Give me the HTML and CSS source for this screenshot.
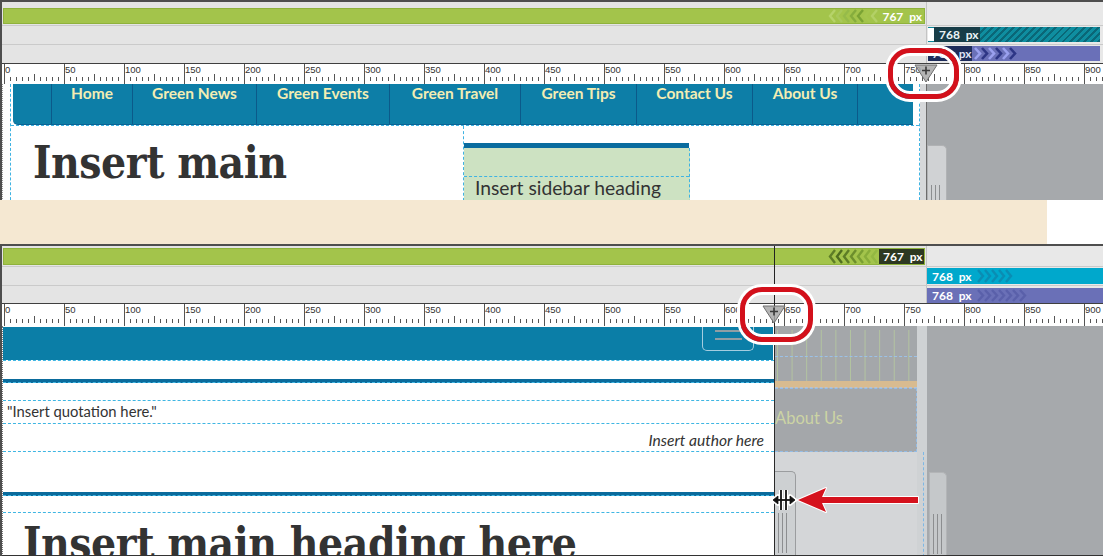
FILE: index.html
```html
<!DOCTYPE html>
<html>
<head>
<meta charset="utf-8">
<title>Media query resize</title>
<link rel="stylesheet" href="styles.css">
</head>
<body>
<div class="screen">

  <section class="panel panel-top">
    <div class="rows">
      <div class="row r1">
        <div class="lane">
          <div class="bar green">
            <svg class="chev" width="52" height="16" viewBox="0 0 52 16">
              <g fill="none" stroke-width="2.4">
                <polyline points="8,2 3,8 8,14" stroke="#b6d36a"/>
                <polyline points="15,2 10,8 15,14" stroke="#a9c95c"/>
                <polyline points="22,2 17,8 22,14" stroke="#96bb4a"/>
                <polyline points="29,2 24,8 29,14" stroke="#86ad3d"/>
                <polyline points="36,2 31,8 36,14" stroke="#7aa334"/>
                <polyline points="43,2 38,8 43,14" stroke="#a4c64e"/>
                <polyline points="50,2 45,8 50,14" stroke="#b3d066"/>
              </g>
            </svg>
            <span class="px">767&nbsp; px</span>
          </div>
        </div>
        <div class="lane right"></div>
      </div>
      <div class="row r2">
        <div class="lane"></div>
        <div class="lane right">
          <div class="bar teal-h">
            <i class="nub"></i>
            <span class="px dark-teal">768&nbsp; px</span>
            <span class="hatch"></span>
          </div>
        </div>
      </div>
      <div class="row r3">
        <div class="lane"></div>
        <div class="lane right">
          <div class="bar purple">
            <span class="px navy">768&nbsp; px</span>
            <svg class="chev" width="50" height="15" viewBox="0 0 50 15">
              <g fill="none" stroke-width="2.6">
                <polyline points="3,2 8,7.5 3,13" stroke="#9aa0ee"/>
                <polyline points="10,2 15,7.5 10,13" stroke="#2d3585"/>
                <polyline points="17,2 22,7.5 17,13" stroke="#9aa0ee"/>
                <polyline points="24,2 29,7.5 24,13" stroke="#2d3585"/>
                <polyline points="31,2 36,7.5 31,13" stroke="#9aa0ee"/>
                <polyline points="38,2 43,7.5 38,13" stroke="#2d3585"/>
              </g>
            </svg>
          </div>
        </div>
      </div>
    </div>

    <div class="ruler">
      <span>0</span><span>50</span><span>100</span><span>150</span><span>200</span><span>250</span><span>300</span><span>350</span><span>400</span><span>450</span><span>500</span><span>550</span><span>600</span><span>650</span><span>700</span><span>750</span><span>800</span><span>850</span><span>900</span>
    </div>

    <div class="view view-top">
      <div class="page page-top">
        <div class="frame">
          <nav class="nav-top">
            <span class="sp"></span>
            <a>Home</a>
            <a>Green News</a>
            <a>Green Events</a>
            <a>Green Travel</a>
            <a>Green Tips</a>
            <a>Contact Us</a>
            <a>About Us</a>
            <span class="sp end"></span>
          </nav>
          <div class="content">
            <div class="main">
              <h1 class="slab">Insert main</h1>
            </div>
            <aside class="sidebar">
              <div class="sb-bar"></div>
              <div class="sb-box">
                <div class="sb-top"></div>
                <h2>Insert sidebar heading</h2>
              </div>
            </aside>
          </div>
        </div>
      </div>
      <div class="strip"></div>
      <div class="off off-top"><div class="handle"><i></i></div></div>
    </div>
  </section>

  <div class="band"><div class="band-fill"></div></div>

  <section class="panel panel-bottom">
    <div class="rows">
      <div class="row r1">
        <div class="lane">
          <div class="bar green">
            <svg class="chev" width="52" height="17" viewBox="0 0 52 17">
              <g fill="none" stroke-width="2.4">
                <polyline points="8,2 3,8.5 8,15" stroke="#5d7d26"/>
                <polyline points="15,2 10,8.5 15,15" stroke="#4f6e1f"/>
                <polyline points="22,2 17,8.5 22,15" stroke="#5d7d26"/>
                <polyline points="29,2 24,8.5 29,15" stroke="#6c8e2c"/>
                <polyline points="36,2 31,8.5 36,15" stroke="#7a9f33"/>
                <polyline points="43,2 38,8.5 43,15" stroke="#88ad3a"/>
                <polyline points="50,2 45,8.5 50,15" stroke="#93b842"/>
              </g>
            </svg>
            <span class="px olive">767&nbsp; px</span>
          </div>
        </div>
        <div class="lane right"></div>
      </div>
      <div class="row r2">
        <div class="lane"></div>
        <div class="lane right">
          <div class="bar cyan">
            <span class="px">768&nbsp; px</span>
            <svg class="chev" width="40" height="16" viewBox="0 0 40 16">
              <g fill="none" stroke-width="2.4" stroke="#0a8db3">
                <polyline points="3,2 8,8 3,14"/>
                <polyline points="10,2 15,8 10,14"/>
                <polyline points="17,2 22,8 17,14"/>
                <polyline points="24,2 29,8 24,14"/>
                <polyline points="31,2 36,8 31,14"/>
              </g>
            </svg>
          </div>
        </div>
      </div>
      <div class="row r3">
        <div class="lane"></div>
        <div class="lane right">
          <div class="bar purple-b">
            <span class="px">768&nbsp; px</span>
            <svg class="chev" width="56" height="15" viewBox="0 0 56 15">
              <g fill="none" stroke-width="2.4" stroke="#5a60aa">
                <polyline points="3,2 8,7.5 3,13"/>
                <polyline points="10,2 15,7.5 10,13"/>
                <polyline points="17,2 22,7.5 17,13"/>
                <polyline points="24,2 29,7.5 24,13"/>
                <polyline points="31,2 36,7.5 31,13"/>
                <polyline points="38,2 43,7.5 38,13"/>
                <polyline points="45,2 50,7.5 45,13"/>
              </g>
            </svg>
          </div>
        </div>
      </div>
    </div>

    <div class="ruler ruler-b">
      <span>0</span><span>50</span><span>100</span><span>150</span><span>200</span><span>250</span><span>300</span><span>350</span><span>400</span><span>450</span><span>500</span><span>550</span><span>600</span><span>650</span><span>700</span><span>750</span><span>800</span><span>850</span><span>900</span>
    </div>

    <div class="view view-bottom">
      <div class="page page-b">
        <nav class="nav-b"><div class="burger"><i></i><i></i></div></nav>
        <div class="gap g1"></div>
        <div class="rule"></div>
        <div class="gap g2"></div>
        <div class="quote">"Insert quotation here."</div>
        <div class="author">Insert author here</div>
        <div class="gap g3"></div>
        <div class="rule"></div>
        <div class="gap g4"></div>
        <div class="heading"><h1 class="slab">Insert main heading here</h1></div>
      </div>
      <div class="gutter">
        <div class="g-upper">
          <div class="g-lines first"></div>
          <div class="g-lines second"></div>
          <div class="g-tan"></div>
          <div class="g-about">About Us</div>
        </div>
        <div class="g-lower"><div class="handle small"><i></i></div></div>
      </div>
      <div class="strip2"><div class="strip2-line"></div></div>
      <div class="off off-b"><div class="handle tall"><i></i></div></div>
    </div>
  </section>

  <div class="vline"></div>

  <svg class="marker m1" width="24" height="19" viewBox="0 0 24 19">
    <polygon points="1,1 23,1 12,18" fill="#a7a7a7" fill-opacity="0.85" stroke="#6f6f6f" stroke-width="1"/>
    <path d="M8 6.5h8M12 2.5v8" stroke="#3a3a3a" stroke-width="1.6"/>
  </svg>
  <svg class="marker m2" width="24" height="19" viewBox="0 0 24 19">
    <polygon points="1,1 23,1 12,18" fill="#a7a7a7" fill-opacity="0.85" stroke="#6f6f6f" stroke-width="1"/>
    <path d="M8 6.5h8M12 2.5v8" stroke="#3a3a3a" stroke-width="1.6"/>
  </svg>

  <div class="ring ring-top"></div>
  <div class="ring ring-bot"></div>

  <svg class="arrow" width="126" height="30" viewBox="0 0 126 30">
    <polygon points="3,15 31,3 27,12 123,12 123,18 27,18 31,27" fill="#d5121d" stroke="#fff" stroke-width="2" stroke-linejoin="round" paint-order="stroke"/>
  </svg>

  <svg class="cursor" width="26" height="24" viewBox="0 0 26 24">
    <g stroke="#fff" stroke-width="4" fill="#fff" stroke-linejoin="round">
      <path d="M10 2v20M15 2v20" fill="none"/>
      <path d="M2 12l5-4v8z"/>
      <path d="M24 12l-5-4v8z"/>
      <path d="M5 12h16" fill="none"/>
    </g>
    <g stroke="#111" stroke-width="1.8" fill="#111">
      <path d="M10 2v20M15 2v20" fill="none"/>
      <path d="M2 12l5-4v8z" stroke-width="0.8"/>
      <path d="M24 12l-5-4v8z" stroke-width="0.8"/>
      <path d="M5 12h16" fill="none"/>
    </g>
  </svg>

</div>
</body>
</html>
```

FILE: styles.css
```css
html, body {
  margin: 0;
  padding: 0;
  background: #ffffff;
}

body {
  font-family: "Lato", "Open Sans", sans-serif;
  color: #333333;
}

.screen {
  position: relative;
  width: 1103px;
  height: 556px;
  overflow: hidden;
  background: #ffffff;
}

/* ---------- panels ---------- */
.panel {
  box-sizing: border-box;
  border-top: 2px solid #4e4e4e;
  border-left: 2px solid #4e4e4e;
  display: flex;
  flex-direction: column;
  overflow: hidden;
}

.panel-top {
  height: 200px;
}

.panel-bottom {
  height: 312px;
}

.row {
  display: grid;
  grid-template-columns: 924px 1fr;
  box-sizing: border-box;
}

.lane {
  background: #e4e4e4;
  display: flex;
  align-items: flex-start;
}

.lane.right {
  background: #e8e8e8;
  border-left: 1px solid #c4c4c4;
}

.panel-top .r1 { height: 24px; border-bottom: 1px solid #cacaca; }
.panel-top .r2 { height: 19px; border-bottom: 1px solid #cacaca; }
.panel-top .r3 { height: 18px; }

.panel-bottom .r1 { height: 21px; border-bottom: 1px solid #cacaca; }
.panel-bottom .r2 { height: 19px; border-bottom: 1px solid #cacaca; }
.panel-bottom .r3 { height: 17px; }

.bar {
  display: flex;
  align-items: center;
  box-sizing: border-box;
}

.px {
  font-family: "Lato", sans-serif;
  font-weight: 700;
  font-size: 12px;
  color: #ffffff;
  white-space: nowrap;
  height: 100%;
  display: flex;
  align-items: center;
  box-sizing: border-box;
}

.green {
  width: 922px;
  margin-left: 1px;
  background: #a3c44b;
  border: 1px solid #8fb23c;
  justify-content: flex-end;
}

.panel-top .green {
  margin-top: 6px;
  height: 16px;
}

.panel-top .green .px {
  padding: 0 2px 0 3px;
}

.panel-bottom .green {
  margin-top: 2px;
  height: 17px;
}

.px.olive {
  background: #2d3821;
  padding: 0 2px 0 4px;
  width: 45px;
}

/* top right bars */
.teal-h {
  margin: 1px 3px 0 1px;
  height: 15px;
  flex: 1;
  background: #0c8799;
}

.nub {
  display: block;
  width: 6px;
  height: 13px;
  background: #ffffff;
}

.px.dark-teal {
  background: #173d48;
  color: #eaf3f5;
  width: 46px;
  padding-left: 5px;
}

.hatch {
  flex: 1;
  height: 100%;
  background: repeating-linear-gradient(135deg, #0f8ea0 0 3px, #0a6777 3px 5px);
}

.purple {
  margin: 1px 3px 0 1px;
  height: 15px;
  flex: 1;
  background: #6a70b8;
}

.px.navy {
  background: #1e2c5a;
  color: #dfe3f4;
  width: 44px;
  padding-left: 4px;
}

/* bottom right bars */
.cyan {
  margin-top: 1px;
  height: 16px;
  flex: 1;
  background: #00a8cc;
}

.cyan .px,
.purple-b .px {
  padding-left: 5px;
  padding-right: 3px;
}

.purple-b {
  margin-top: 2px;
  height: 15px;
  flex: 1;
  background: #6a70b7;
}

/* ---------- ruler ---------- */
.ruler {
  box-sizing: border-box;
  height: 21px;
  border-top: 1px solid #3f3f3f;
  background-color: #ffffff;
  background-image:
    linear-gradient(to right, #555 1px, transparent 1px),
    linear-gradient(to right, #555 1px, transparent 1px),
    linear-gradient(to right, #555 1px, transparent 1px);
  background-size: 60px 100%, 60px 7px, 6px 4px;
  background-repeat: repeat-x;
  background-position: left 2px top 0, left 32px bottom 3px, left 2px bottom 3px;
  display: flex;
  padding-left: 3px;
  overflow: hidden;
  flex-shrink: 0;
}

.ruler-b {
  height: 23px;
}

.ruler span {
  flex: 0 0 60px;
  font-family: "Liberation Sans", sans-serif;
  font-size: 9.5px;
  line-height: 11px;
  color: #333;
}

/* ---------- top view ---------- */
.view {
  display: grid;
  overflow: hidden;
  flex: 1;
}

.view-top {
  grid-template-columns: 918px 6px 1fr;
}

.page-top {
  background: #ffffff;
  border-left: 1px dotted #9a9a9a;
  padding-left: 7px;
  overflow: hidden;
}

.frame {
  border-left: 1px dashed #3fb3e2;
  border-right: 1px dashed #3fb3e2;
  height: 100%;
  box-sizing: border-box;
}

.nav-top {
  margin-left: 2px;
  width: 900px;
  height: 41px;
  box-sizing: border-box;
  background: #0d7ea7;
  border-bottom: 1px solid #0b6292;
  border-radius: 0 0 0 5px;
  display: grid;
  grid-template-columns: 38px 81px 124px 133px 131px 116px 116px 105px 1fr;
}

.nav-top a,
.nav-top .sp.end {
  border-left: 1px solid #0b5a8a;
}

.nav-top a {
  text-align: center;
  color: #f3edb3;
  font-family: "Lato", sans-serif;
  font-weight: 700;
  font-size: 15.5px;
  line-height: 18px;
  white-space: nowrap;
}

.content {
  display: flex;
  border-top: 1px dashed #3fb3e2;
  height: 80px;
}

.main {
  flex: 0 0 452px;
}

.slab {
  margin: 0;
  font-family: "DejaVu Serif", serif;
  font-weight: 700;
  font-stretch: condensed;
  color: #333333;
  letter-spacing: -0.5px;
  white-space: nowrap;
}

.main .slab {
  font-size: 44px;
  line-height: 50px;
  padding: 12px 0 0 22px;
}

.sidebar {
  flex: 0 0 227px;
  box-sizing: border-box;
  border-left: 1px dashed #3fb3e2;
  padding-top: 17px;
}

.sb-bar {
  height: 5px;
  background: #0a6c9f;
  margin-right: 1px;
}

.sb-box {
  background: #cde2c2;
  border-right: 1px dashed #3fb3e2;
  height: 60px;
}

.sb-top {
  height: 29px;
  box-sizing: border-box;
  border-bottom: 1px dashed #3fb3e2;
}

.sb-box h2 {
  margin: 0;
  padding-left: 11px;
  font-family: "Lato", sans-serif;
  font-weight: 400;
  font-size: 19.3px;
  line-height: 22px;
  color: #333333;
  white-space: nowrap;
}

.strip {
  background: #d6d8da;
}

.off {
  background: #a6a9ac;
}

.off-top {
  border-left: 1px solid #6c6c6c;
}

.handle {
  box-sizing: border-box;
  background: #d0d2d4;
  border: 1px solid #b0b2b4;
  border-bottom: 0;
  border-radius: 0 5px 0 0;
  display: flex;
  align-items: flex-end;
  padding-left: 3px;
}

.handle i {
  display: block;
  width: 11px;
  height: 70%;
  background: repeating-linear-gradient(to right, #8c8e90 0 1px, transparent 1px 4px);
}

.off-top .handle {
  margin-top: 61px;
  width: 20px;
  height: 60px;
}

.off-top .handle i {
  height: 20px;
}

/* ---------- band ---------- */
.band {
  height: 44px;
  display: flex;
  background: #ffffff;
}

.band-fill {
  width: 1047px;
  background: #f5e8d2;
}

/* ---------- bottom view ---------- */
.view-bottom {
  grid-template-columns: 773px 142px 10px 1fr;
  border-bottom: 1px solid #333;
  box-sizing: border-box;
}

.page-b {
  background: #ffffff;
  border-left: 1px dotted #777;
  border-right: 1px solid #2a2a2a;
  overflow: hidden;
}

.nav-b {
  margin-top: 1px;
  height: 33px;
  margin-right: 1px;
  background: #0b7ea7;
  display: flex;
  justify-content: flex-end;
  padding-right: 19px;
}

.burger {
  width: 52px;
  height: 24px;
  box-sizing: border-box;
  border: 1px solid #a5cde0;
  border-top: 0;
  border-radius: 0 0 5px 5px;
  padding-top: 3px;
  display: flex;
  flex-direction: column;
  align-items: center;
  gap: 6px;
}

.burger i {
  display: block;
  width: 27px;
  height: 2px;
  background: #8f9ea4;
}

.gap,
.quote,
.author,
.heading {
  box-sizing: border-box;
  border-top: 1px dashed #3fb6e3;
}

.g1 { height: 19px; }
.g2 { height: 17px; border-top: 0; }
.g3 { height: 41px; }
.g4 { height: 16px; border-top: 0; }

.rule {
  height: 4px;
  box-sizing: border-box;
  background: #0a6b9c;
  border-bottom: 1px dashed #3fb6e3;
}

.quote {
  height: 23px;
  padding-left: 4px;
  font-size: 14.8px;
  line-height: 21px;
  color: #333;
}

.author {
  height: 28px;
  text-align: right;
  padding: 5px 10px 0 0;
  font-size: 15.6px;
  line-height: 22px;
  font-style: italic;
  color: #333;
}

.heading {
  overflow: hidden;
}

.heading .slab {
  font-size: 44px;
  line-height: 50px;
  padding: 6px 0 0 20px;
}

.gutter {
  display: flex;
  flex-direction: column;
}

.g-upper {
  height: 126px;
  background: #a4a7aa;
}

.g-lines {
  background-image: linear-gradient(to right, #b3c4a0 1px, transparent 1px);
  background-size: 14.6px 100%;
  background-position: 2px 0;
  box-sizing: border-box;
}

.g-lines.first {
  height: 31px;
  border-bottom: 1px dashed #9cc2e8;
  background-position: 2px 4px;
  background-repeat: repeat-x;
}

.g-lines.second {
  height: 24px;
}

.g-tan {
  height: 7px;
  background: #d8bb90;
  border-bottom: 1px dashed #b6c3d6;
  box-sizing: border-box;
}

.g-about {
  height: 64px;
  box-sizing: border-box;
  border: 1px dashed #94bde6;
  border-left: 0;
  padding-top: 18px;
  font-size: 16.5px;
  line-height: 22px;
  color: #ccd4a4;
}

.g-lower {
  flex: 1;
  background: #d4d6d8;
}

.handle.small {
  margin-top: 19px;
  width: 21px;
  height: 90px;
  background: #cdd0d2;
  border-color: #9b9d9f;
  border-left: 0;
}

.handle.small i {
  height: 40px;
  margin-bottom: 8px;
}

.strip2 {
  background: #cfd2d4;
}

.strip2-line {
  margin-top: 126px;
  width: 6px;
  height: 110px;
  border-right: 1px dashed #7db8e6;
}

.off-b .handle.tall {
  margin: 146px 0 0 2px;
  width: 18px;
  height: 90px;
  background: #c5c8ca;
  border-color: #b3b5b7;
}

.off-b .handle.tall i {
  height: 40px;
  margin-bottom: 8px;
}

/* ---------- overlays ---------- */
.vline {
  position: absolute;
  left: 774px;
  top: 246px;
  width: 1px;
  height: 80px;
  background: #222;
}

.marker {
  position: absolute;
}

.m1 { left: 914px; top: 64px; }
.m2 { left: 762px; top: 305px; }

.ring {
  position: absolute;
  box-sizing: border-box;
  border: 5px solid #d3101b;
  border-radius: 22px;
  box-shadow: 0 0 0 3px #ffffff, inset 0 0 0 3px #ffffff;
}

.ring-top {
  left: 888px;
  top: 48px;
  width: 71px;
  height: 51px;
}

.ring-bot {
  left: 740px;
  top: 287px;
  width: 73px;
  height: 55px;
}

.arrow {
  position: absolute;
  left: 795px;
  top: 485px;
}

.cursor {
  position: absolute;
  left: 771px;
  top: 488px;
}
```
